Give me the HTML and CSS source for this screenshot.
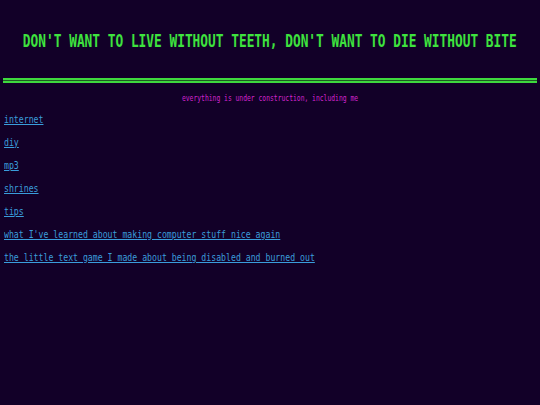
FILE: index.html
```html
<!DOCTYPE html>
<html>
<head>
<meta charset="utf-8">
<link rel="stylesheet" href="styles.css">
<title>home</title>
</head>
<body>
<header class="top">
  <h1 class="title"><span class="title-text">DON'T WANT TO LIVE WITHOUT TEETH, DON'T WANT TO DIE WITHOUT BITE</span></h1>
</header>
<hr class="rule">
<p class="sub"><span class="sub-text">everything is under construction, including me</span></p>
<ul class="links">
  <li><a class="link" href="#">internet</a></li>
  <li><a class="link" href="#">diy</a></li>
  <li><a class="link" href="#">mp3</a></li>
  <li><a class="link" href="#">shrines</a></li>
  <li><a class="link" href="#">tips</a></li>
  <li><a class="link" href="#">what I've learned about making computer stuff nice again</a></li>
  <li><a class="link" href="#">the little text game I made about being disabled and burned out</a></li>
</ul>
</body>
</html>
```

FILE: styles.css
```css
html, body {
  margin: 0;
  padding: 0;
  background: #120028;
  overflow: hidden;
}
body {
  font-family: "DejaVu Sans Mono", "Liberation Mono", monospace;
  width: 540px;
  height: 405px;
}
.top {
  padding-top: 29px;
}
.title {
  margin: 0;
  display: flex;
  justify-content: center;
  font-size: 18px;
  line-height: 24px;
  font-weight: bold;
  color: #3ee33e;
  white-space: nowrap;
}
.title-text {
  display: inline-block;
  transform: scaleX(0.712);
  transform-origin: center;
}
.rule {
  margin: 25px 3px 0 3px;
  height: 1px;
  border: 0;
  border-top: 2px solid #3ed83e;
  border-bottom: 2px solid #3ed83e;
  background: #1f5a24;
}
.sub {
  margin: 9px 0 0 0;
  display: flex;
  justify-content: center;
  font-size: 8.6px;
  line-height: 12px;
  color: #d024cc;
  white-space: nowrap;
}
.sub-text {
  display: inline-block;
  transform: scaleX(0.74);
  transform-origin: center;
}
.links {
  list-style: none;
  margin: 4px 0 0 0;
  padding: 0 0 0 4px;
  font-size: 11px;
  line-height: 23px;
}
.links li {
  white-space: nowrap;
}
.link {
  display: inline-block;
  color: #3a9ddb;
  text-decoration: underline;
  transform: scaleX(0.745);
  transform-origin: left;
}
```
